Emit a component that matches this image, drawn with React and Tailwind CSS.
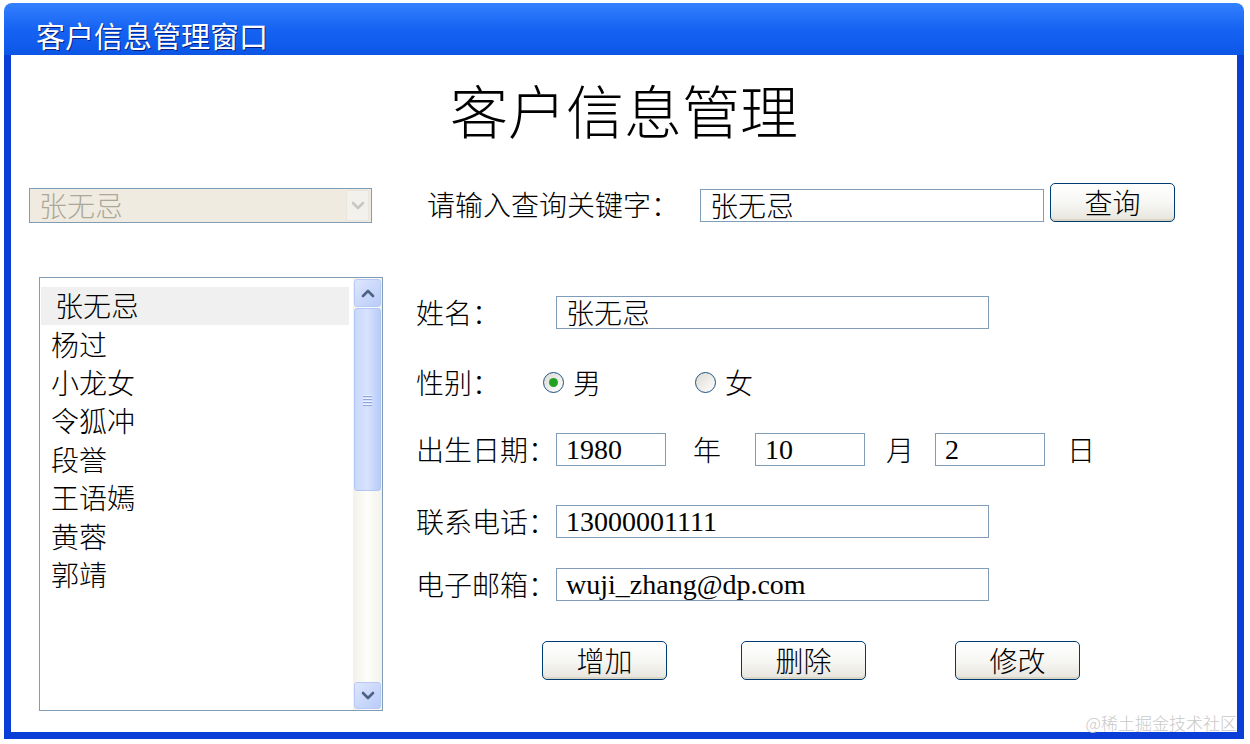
import React from "react";

const people = ["张无忌", "杨过", "小龙女", "令狐冲", "段誉", "王语嫣", "黄蓉", "郭靖"];

const Field = ({ width, cjk, children }) => (
  <div
    className={`${width} h-[33px] border border-[#7f9db9] bg-white flex items-center pl-[9px] leading-none ${
      cjk ? "pt-[4px]" : ""
    }`}
  >
    {children}
  </div>
);

const XpButton = ({ children, className = "" }) => (
  <div
    className={`w-[125px] h-[39px] rounded-[5px] border-[1.5px] border-[#003c74] bg-linear-to-b from-white via-[#f7f7f4] to-[#e6e4dc] flex items-center justify-center pt-[4px] leading-none shadow-[inset_0_-2px_0_#d8d4c6] ${className}`}
  >
    {children}
  </div>
);

const Radio = ({ checked }) => (
  <div className="w-[21px] h-[21px] rounded-full border-[1.5px] border-[#1c5180] bg-linear-to-br from-[#dcdad3] to-white flex items-center justify-center">
    {checked && <div className="w-[9px] h-[9px] rounded-full bg-[#22a222]" />}
  </div>
);

const Chevron = ({ up, color }) => (
  <svg width="14" height="10" viewBox="0 0 14 10">
    <path
      d={up ? "M2 8 L7 3 L12 8" : "M2 2 L7 7 L12 2"}
      fill="none"
      stroke={color}
      strokeWidth="2.6"
      strokeLinecap="round"
      strokeLinejoin="round"
    />
  </svg>
);

export default function App() {
  return (
    <div className="w-[1250px] h-[744px] bg-white pt-[3px] pl-[4px] overflow-hidden font-['Liberation_Serif','Noto_Sans_CJK_SC',serif] font-light text-[28px] text-black">
      <div className="w-[1240px] h-[736px] flex flex-col">
        {/* title bar */}
        <div className="h-[52px] rounded-t-[8px] bg-linear-to-b from-[#3380ff] via-[#1663f3] to-[#0c56e6] pl-[32px] pt-[21px]">
          <div className="text-white text-[29px] font-normal leading-none [text-shadow:1px_1px_0_#0a1f7d]">
            客户信息管理窗口
          </div>
        </div>

        {/* window body */}
        <div className="flex-1 border-x-[7px] border-b-[7px] border-[#0a3ed6] relative">
          <div className="mt-[31px] text-center text-[58px] leading-none">客户信息管理</div>

          {/* search row */}
          <div className="flex items-start h-[40px] mt-[39px]">
            <div className="ml-[18px] mt-[5px] w-[343px] h-[35px] border border-[#7f9db9] bg-[#efebe0] flex items-center">
              <div className="flex-1 pl-[9px] pt-[4px] leading-none text-[#aca899]">张无忌</div>
              <div className="w-[23px] h-[31px] mr-[2px] bg-[#f2f1ec] border border-[#e8e6df] flex items-center justify-center">
                <Chevron color="#c9c7c0" />
              </div>
            </div>
            <div className="ml-[55px] mt-[10px] w-[273px] leading-none">请输入查询关键字：</div>
            <div className="mt-[6px]">
              <Field width="w-[344px]" cjk>
                张无忌
              </Field>
            </div>
            <XpButton className="ml-[6px]">查询</XpButton>
          </div>

          {/* main area */}
          <div className="flex mt-[54px]">
            {/* list box */}
            <div className="ml-[28px] w-[344px] h-[434px] border border-[#7f9db9] flex bg-white">
              <div className="flex-1 pt-[9px] pl-[1px] pr-[4px]">
                {people.map((p, i) => (
                  <div
                    key={p}
                    className={`h-[38.4px] flex items-center pt-[4px] leading-none ${
                      i === 0 ? "bg-[#f0f0f0] pl-[14px]" : "pl-[10px]"
                    }`}
                  >
                    {p}
                  </div>
                ))}
              </div>
              <div className="w-[29px] flex flex-col p-[1px] bg-linear-to-r from-[#f3f1e9] via-[#fdfdfa] to-[#f3f1e9]">
                <div className="h-[28px] rounded-[3px] border border-[#b7c9f4] bg-linear-to-br from-[#dde6fd] to-[#b9cbf8] flex items-center justify-center">
                  <Chevron up color="#4d6185" />
                </div>
                <div className="h-[183px] mt-[1px] rounded-[3px] border border-[#b1c6f5] bg-linear-to-r from-[#c9d8fc] via-[#d7e2fd] to-[#b8cbf8] flex flex-col items-center justify-center gap-[2px]">
                  <div className="w-[9px] h-[1px] bg-[#eef3fe] shadow-[0_1px_0_#8ca5e0]" />
                  <div className="w-[9px] h-[1px] bg-[#eef3fe] shadow-[0_1px_0_#8ca5e0]" />
                  <div className="w-[9px] h-[1px] bg-[#eef3fe] shadow-[0_1px_0_#8ca5e0]" />
                  <div className="w-[9px] h-[1px] bg-[#eef3fe] shadow-[0_1px_0_#8ca5e0]" />
                </div>
                <div className="flex-1" />
                <div className="h-[27px] rounded-[3px] border border-[#b7c9f4] bg-linear-to-br from-[#dde6fd] to-[#b9cbf8] flex items-center justify-center">
                  <Chevron color="#4d6185" />
                </div>
              </div>
            </div>

            {/* form */}
            <div className="ml-[33px] mt-[19px] flex flex-col">
              <div className="flex items-center h-[33px]">
                <div className="w-[140px] pt-[4px] leading-none">姓名：</div>
                <Field width="w-[433px]" cjk>
                  张无忌
                </Field>
              </div>

              <div className="flex items-center h-[33px] mt-[37px]">
                <div className="w-[127px] pt-[4px] leading-none">性别：</div>
                <Radio checked />
                <div className="ml-[9px] pt-[4px] leading-none">男</div>
                <div className="ml-[94px]">
                  <Radio />
                </div>
                <div className="ml-[9px] pt-[4px] leading-none">女</div>
              </div>

              <div className="flex items-center h-[33px] mt-[34px]">
                <div className="w-[140px] pt-[4px] leading-none">出生日期：</div>
                <Field width="w-[110px]">1980</Field>
                <div className="ml-[27px] pt-[4px] leading-none">年</div>
                <div className="ml-[34px]">
                  <Field width="w-[110px]">10</Field>
                </div>
                <div className="ml-[21px] pt-[4px] leading-none">月</div>
                <div className="ml-[21px]">
                  <Field width="w-[110px]">2</Field>
                </div>
                <div className="ml-[22px] pt-[4px] leading-none">日</div>
              </div>

              <div className="flex items-center h-[33px] mt-[39px]">
                <div className="w-[140px] pt-[4px] leading-none">联系电话：</div>
                <Field width="w-[433px]">13000001111</Field>
              </div>

              <div className="flex items-center h-[33px] mt-[30px]">
                <div className="w-[140px] pt-[4px] leading-none">电子邮箱：</div>
                <Field width="w-[433px]">wuji_zhang@dp.com</Field>
              </div>

              <div className="flex mt-[40px]">
                <XpButton className="ml-[126px]">增加</XpButton>
                <XpButton className="ml-[74px]">删除</XpButton>
                <XpButton className="ml-[89px]">修改</XpButton>
              </div>
            </div>
          </div>

          {/* watermark */}
          <div className="absolute right-[0px] bottom-[1px] text-[17px] leading-none text-[#c9c9c9] font-['Noto_Sans_CJK_SC',sans-serif]">
            @稀土掘金技术社区
          </div>
        </div>
      </div>
    </div>
  );
}
